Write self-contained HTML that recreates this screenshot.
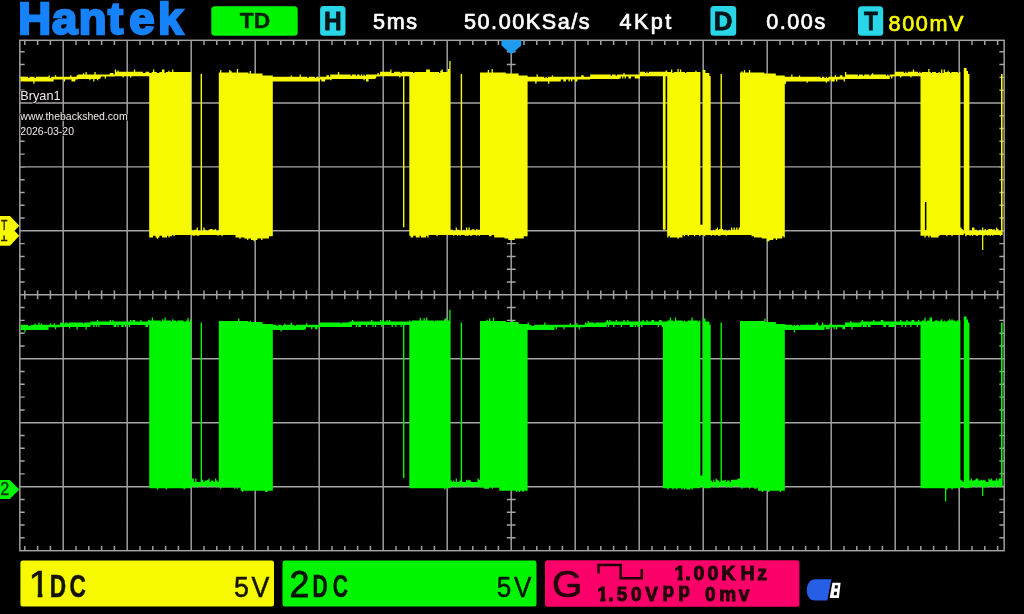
<!DOCTYPE html>
<html lang="en">
<head>
<meta charset="utf-8">
<title>Hantek oscilloscope capture</title>
<style>
html,body{margin:0;padding:0;background:#000;}
body{width:1024px;height:614px;overflow:hidden;position:relative;font-family:"Liberation Sans",sans-serif;}
svg{position:absolute;left:0;top:0;display:block;}
svg{will-change:transform;filter:blur(.45px);}
text{font-family:"Liberation Sans",sans-serif;}
.hd{font-size:21.6px;fill:#fff;letter-spacing:1.55px;stroke:#fff;stroke-width:.7px;}
.wm{fill:#f4eaea;stroke:#000;stroke-width:1.6px;paint-order:stroke;stroke-linejoin:round;}
</style>
</head>
<body>
<svg width="1024" height="614" viewBox="0 0 1024 614">
<rect width="1024" height="614" fill="#000"/>
<g id="grid"><rect x="19.84" y="40.3" width="984.32" height="510.40" fill="none" stroke="#a4a4a4" stroke-width="1.45"/><path d="M63.20 40.3V550.7M127.20 40.3V550.7M191.20 40.3V550.7M255.20 40.3V550.7M319.20 40.3V550.7M383.20 40.3V550.7M447.20 40.3V550.7M511.20 40.3V550.7M575.20 40.3V550.7M639.20 40.3V550.7M703.20 40.3V550.7M767.20 40.3V550.7M831.20 40.3V550.7M895.20 40.3V550.7M959.20 40.3V550.7M19.84 102.92H1004.16M19.84 166.88H1004.16M19.84 230.84H1004.16M19.84 294.80H1004.16M19.84 358.76H1004.16M19.84 422.72H1004.16M19.84 486.68H1004.16M24.80 40.3v4.6M24.80 550.7v-4.6M24.80 290.40v8.8M37.60 40.3v4.6M37.60 550.7v-4.6M37.60 290.40v8.8M50.40 40.3v4.6M50.40 550.7v-4.6M50.40 290.40v8.8M63.20 40.3v4.6M63.20 550.7v-4.6M63.20 290.40v8.8M76.00 40.3v4.6M76.00 550.7v-4.6M76.00 290.40v8.8M88.80 40.3v4.6M88.80 550.7v-4.6M88.80 290.40v8.8M101.60 40.3v4.6M101.60 550.7v-4.6M101.60 290.40v8.8M114.40 40.3v4.6M114.40 550.7v-4.6M114.40 290.40v8.8M127.20 40.3v4.6M127.20 550.7v-4.6M127.20 290.40v8.8M140.00 40.3v4.6M140.00 550.7v-4.6M140.00 290.40v8.8M152.80 40.3v4.6M152.80 550.7v-4.6M152.80 290.40v8.8M165.60 40.3v4.6M165.60 550.7v-4.6M165.60 290.40v8.8M178.40 40.3v4.6M178.40 550.7v-4.6M178.40 290.40v8.8M191.20 40.3v4.6M191.20 550.7v-4.6M191.20 290.40v8.8M204.00 40.3v4.6M204.00 550.7v-4.6M204.00 290.40v8.8M216.80 40.3v4.6M216.80 550.7v-4.6M216.80 290.40v8.8M229.60 40.3v4.6M229.60 550.7v-4.6M229.60 290.40v8.8M242.40 40.3v4.6M242.40 550.7v-4.6M242.40 290.40v8.8M255.20 40.3v4.6M255.20 550.7v-4.6M255.20 290.40v8.8M268.00 40.3v4.6M268.00 550.7v-4.6M268.00 290.40v8.8M280.80 40.3v4.6M280.80 550.7v-4.6M280.80 290.40v8.8M293.60 40.3v4.6M293.60 550.7v-4.6M293.60 290.40v8.8M306.40 40.3v4.6M306.40 550.7v-4.6M306.40 290.40v8.8M319.20 40.3v4.6M319.20 550.7v-4.6M319.20 290.40v8.8M332.00 40.3v4.6M332.00 550.7v-4.6M332.00 290.40v8.8M344.80 40.3v4.6M344.80 550.7v-4.6M344.80 290.40v8.8M357.60 40.3v4.6M357.60 550.7v-4.6M357.60 290.40v8.8M370.40 40.3v4.6M370.40 550.7v-4.6M370.40 290.40v8.8M383.20 40.3v4.6M383.20 550.7v-4.6M383.20 290.40v8.8M396.00 40.3v4.6M396.00 550.7v-4.6M396.00 290.40v8.8M408.80 40.3v4.6M408.80 550.7v-4.6M408.80 290.40v8.8M421.60 40.3v4.6M421.60 550.7v-4.6M421.60 290.40v8.8M434.40 40.3v4.6M434.40 550.7v-4.6M434.40 290.40v8.8M447.20 40.3v4.6M447.20 550.7v-4.6M447.20 290.40v8.8M460.00 40.3v4.6M460.00 550.7v-4.6M460.00 290.40v8.8M472.80 40.3v4.6M472.80 550.7v-4.6M472.80 290.40v8.8M485.60 40.3v4.6M485.60 550.7v-4.6M485.60 290.40v8.8M498.40 40.3v4.6M498.40 550.7v-4.6M498.40 290.40v8.8M511.20 40.3v4.6M511.20 550.7v-4.6M511.20 290.40v8.8M524.00 40.3v4.6M524.00 550.7v-4.6M524.00 290.40v8.8M536.80 40.3v4.6M536.80 550.7v-4.6M536.80 290.40v8.8M549.60 40.3v4.6M549.60 550.7v-4.6M549.60 290.40v8.8M562.40 40.3v4.6M562.40 550.7v-4.6M562.40 290.40v8.8M575.20 40.3v4.6M575.20 550.7v-4.6M575.20 290.40v8.8M588.00 40.3v4.6M588.00 550.7v-4.6M588.00 290.40v8.8M600.80 40.3v4.6M600.80 550.7v-4.6M600.80 290.40v8.8M613.60 40.3v4.6M613.60 550.7v-4.6M613.60 290.40v8.8M626.40 40.3v4.6M626.40 550.7v-4.6M626.40 290.40v8.8M639.20 40.3v4.6M639.20 550.7v-4.6M639.20 290.40v8.8M652.00 40.3v4.6M652.00 550.7v-4.6M652.00 290.40v8.8M664.80 40.3v4.6M664.80 550.7v-4.6M664.80 290.40v8.8M677.60 40.3v4.6M677.60 550.7v-4.6M677.60 290.40v8.8M690.40 40.3v4.6M690.40 550.7v-4.6M690.40 290.40v8.8M703.20 40.3v4.6M703.20 550.7v-4.6M703.20 290.40v8.8M716.00 40.3v4.6M716.00 550.7v-4.6M716.00 290.40v8.8M728.80 40.3v4.6M728.80 550.7v-4.6M728.80 290.40v8.8M741.60 40.3v4.6M741.60 550.7v-4.6M741.60 290.40v8.8M754.40 40.3v4.6M754.40 550.7v-4.6M754.40 290.40v8.8M767.20 40.3v4.6M767.20 550.7v-4.6M767.20 290.40v8.8M780.00 40.3v4.6M780.00 550.7v-4.6M780.00 290.40v8.8M792.80 40.3v4.6M792.80 550.7v-4.6M792.80 290.40v8.8M805.60 40.3v4.6M805.60 550.7v-4.6M805.60 290.40v8.8M818.40 40.3v4.6M818.40 550.7v-4.6M818.40 290.40v8.8M831.20 40.3v4.6M831.20 550.7v-4.6M831.20 290.40v8.8M844.00 40.3v4.6M844.00 550.7v-4.6M844.00 290.40v8.8M856.80 40.3v4.6M856.80 550.7v-4.6M856.80 290.40v8.8M869.60 40.3v4.6M869.60 550.7v-4.6M869.60 290.40v8.8M882.40 40.3v4.6M882.40 550.7v-4.6M882.40 290.40v8.8M895.20 40.3v4.6M895.20 550.7v-4.6M895.20 290.40v8.8M908.00 40.3v4.6M908.00 550.7v-4.6M908.00 290.40v8.8M920.80 40.3v4.6M920.80 550.7v-4.6M920.80 290.40v8.8M933.60 40.3v4.6M933.60 550.7v-4.6M933.60 290.40v8.8M946.40 40.3v4.6M946.40 550.7v-4.6M946.40 290.40v8.8M959.20 40.3v4.6M959.20 550.7v-4.6M959.20 290.40v8.8M972.00 40.3v4.6M972.00 550.7v-4.6M972.00 290.40v8.8M984.80 40.3v4.6M984.80 550.7v-4.6M984.80 290.40v8.8M997.60 40.3v4.6M997.60 550.7v-4.6M997.60 290.40v8.8M19.84 51.79h4.8M1004.16 51.79h-4.8M506.80 51.79h8.8M19.84 64.58h4.8M1004.16 64.58h-4.8M506.80 64.58h8.8M19.84 77.37h4.8M1004.16 77.37h-4.8M506.80 77.37h8.8M19.84 90.16h4.8M1004.16 90.16h-4.8M506.80 90.16h8.8M19.84 102.95h4.8M1004.16 102.95h-4.8M506.80 102.95h8.8M19.84 115.74h4.8M1004.16 115.74h-4.8M506.80 115.74h8.8M19.84 128.53h4.8M1004.16 128.53h-4.8M506.80 128.53h8.8M19.84 141.32h4.8M1004.16 141.32h-4.8M506.80 141.32h8.8M19.84 154.11h4.8M1004.16 154.11h-4.8M506.80 154.11h8.8M19.84 166.90h4.8M1004.16 166.90h-4.8M506.80 166.90h8.8M19.84 179.69h4.8M1004.16 179.69h-4.8M506.80 179.69h8.8M19.84 192.48h4.8M1004.16 192.48h-4.8M506.80 192.48h8.8M19.84 205.27h4.8M1004.16 205.27h-4.8M506.80 205.27h8.8M19.84 218.06h4.8M1004.16 218.06h-4.8M506.80 218.06h8.8M19.84 230.85h4.8M1004.16 230.85h-4.8M506.80 230.85h8.8M19.84 243.64h4.8M1004.16 243.64h-4.8M506.80 243.64h8.8M19.84 256.43h4.8M1004.16 256.43h-4.8M506.80 256.43h8.8M19.84 269.22h4.8M1004.16 269.22h-4.8M506.80 269.22h8.8M19.84 282.01h4.8M1004.16 282.01h-4.8M506.80 282.01h8.8M19.84 294.80h4.8M1004.16 294.80h-4.8M506.80 294.80h8.8M19.84 307.59h4.8M1004.16 307.59h-4.8M506.80 307.59h8.8M19.84 320.38h4.8M1004.16 320.38h-4.8M506.80 320.38h8.8M19.84 333.17h4.8M1004.16 333.17h-4.8M506.80 333.17h8.8M19.84 345.96h4.8M1004.16 345.96h-4.8M506.80 345.96h8.8M19.84 358.75h4.8M1004.16 358.75h-4.8M506.80 358.75h8.8M19.84 371.54h4.8M1004.16 371.54h-4.8M506.80 371.54h8.8M19.84 384.33h4.8M1004.16 384.33h-4.8M506.80 384.33h8.8M19.84 397.12h4.8M1004.16 397.12h-4.8M506.80 397.12h8.8M19.84 409.91h4.8M1004.16 409.91h-4.8M506.80 409.91h8.8M19.84 422.70h4.8M1004.16 422.70h-4.8M506.80 422.70h8.8M19.84 435.49h4.8M1004.16 435.49h-4.8M506.80 435.49h8.8M19.84 448.28h4.8M1004.16 448.28h-4.8M506.80 448.28h8.8M19.84 461.07h4.8M1004.16 461.07h-4.8M506.80 461.07h8.8M19.84 473.86h4.8M1004.16 473.86h-4.8M506.80 473.86h8.8M19.84 486.65h4.8M1004.16 486.65h-4.8M506.80 486.65h8.8M19.84 499.44h4.8M1004.16 499.44h-4.8M506.80 499.44h8.8M19.84 512.23h4.8M1004.16 512.23h-4.8M506.80 512.23h8.8M19.84 525.02h4.8M1004.16 525.02h-4.8M506.80 525.02h8.8M19.84 537.81h4.8M1004.16 537.81h-4.8M506.80 537.81h8.8" fill="none" stroke="#a4a4a4" stroke-width="1.45"/></g>
<g id="waves"><path d="M20.50 76.80V76.80H21.77V76.80H23.05V76.80H24.32V76.80H25.60V76.80H26.87V76.80H28.15V78.00H29.42V76.80H30.69V76.80H31.97V76.80H33.24V76.80H34.52V78.00H35.79V76.80H37.07V76.80H38.34V76.80H39.61V76.80H40.89V76.80H42.16V76.80H43.44V76.80H44.71V76.80H45.99V76.80H47.26V76.80H48.53V75.50H49.81V78.00H51.08V76.80H52.36V76.80H53.63V76.80H54.90V75.20H56.18V76.80H57.45V76.80H58.73V76.80H60.00V76.80H61.28V76.80H62.55V76.80H63.82V76.80H65.10V76.80H66.37V76.80H67.65V76.80H68.92V76.80H70.20V75.20H71.47V76.80H72.74V76.80H74.02V76.80H75.29V76.80H76.57V75.20H77.84V74.50H79.12V74.50H80.39V74.50H81.66V74.50H82.94V73.20H84.21V74.50H85.49V72.10H86.76V74.50H88.04V74.50H89.31V74.50H90.58V74.50H91.86V74.50H93.13V74.50H94.41V72.10H95.68V74.50H96.96V74.50H98.23V74.50H99.50V74.50H100.78V74.50H102.05V74.50H103.33V74.50H104.60V74.50H105.88V74.50H107.15V74.50H108.42V74.50H109.70V72.90H110.97V72.90H112.25V72.90H113.52V74.50H114.80V69.40H116.07V71.80H117.34V70.50H118.62V71.80H119.89V71.80H121.17V71.80H122.44V71.80H123.71V71.80H124.99V71.80H126.26V71.80H127.54V71.80H128.81V71.80H130.09V71.80H131.36V71.80H132.63V71.80H133.91V69.40H135.18V71.80H136.46V71.80H137.73V71.80H139.01V71.80H140.28V71.80H141.55V71.80H142.83V73.00H144.10V73.00H145.38V71.80H146.65V71.80H147.93V71.80H149.20V73.00H150.47V73.00H151.75V72.00H153.02V69.40H154.29V72.00H155.56V72.00H156.84V73.00H158.11V73.00H159.38V72.00H160.65V72.00H161.93V69.40H163.20V69.40H164.47V73.00H165.75V72.00H167.02V72.00H168.29V70.70H169.56V72.00H170.84V72.00H172.11V69.40H173.38V72.00H174.65V72.00H175.93V72.00H177.20V72.00H178.47V72.00H179.75V72.00H181.02V72.00H182.29V72.00H183.56V72.00H184.84V72.00H186.11V72.00H187.38V72.00H188.65V72.00H189.93V72.00H191.20V229.80H192.54V231.10H193.89V229.80H195.23V229.80H196.57V227.60H197.91V231.10H199.26V231.10H200.60V74.00H202.00V231.10H203.29V227.60H204.58V229.80H205.88V231.10H207.17V231.10H208.46V229.80H209.75V228.90H211.05V228.90H212.34V229.80H213.63V229.80H214.92V228.90H216.22V231.10H217.51V231.10H218.80V72.50H220.09V69.90H221.37V72.50H222.66V72.50H223.94V72.50H225.23V72.50H226.51V72.50H227.80V72.50H229.09V69.90H230.37V71.20H231.66V72.50H232.94V72.50H234.23V72.50H235.51V72.50H236.80V69.00H238.09V72.50H239.37V72.50H240.66V72.50H241.94V72.50H243.23V72.50H244.51V72.50H245.80V72.50H247.09V72.50H248.37V73.60H249.66V71.00H250.94V73.60H252.23V73.60H253.51V73.60H254.80V73.60H256.09V73.60H257.37V73.60H258.66V73.60H259.94V73.60H261.23V73.60H262.51V75.40H263.80V75.40H265.09V75.40H266.37V75.40H267.66V75.40H268.94V75.40H270.23V75.40H271.51V75.40H272.80V76.80H274.08V76.80H275.35V76.80H276.63V76.80H277.91V76.80H279.18V76.80H280.46V76.80H281.74V76.80H283.01V76.80H284.29V76.80H285.56V76.80H286.84V76.80H288.12V76.80H289.39V76.80H290.67V75.50H291.95V76.80H293.22V76.80H294.50V76.80H295.78V76.80H297.05V76.80H298.33V76.80H299.61V74.40H300.88V76.80H302.16V76.80H303.44V76.80H304.71V76.80H305.99V76.80H307.26V78.00H308.54V76.80H309.82V76.80H311.09V76.80H312.37V76.80H313.65V76.80H314.92V78.00H316.20V76.80H317.48V76.80H318.75V78.00H320.03V76.80H321.31V76.80H322.58V76.80H323.86V76.80H325.14V76.80H326.41V75.20H327.69V75.20H328.96V76.80H330.24V74.50H331.52V74.50H332.79V74.50H334.07V74.50H335.35V74.50H336.62V74.50H337.90V72.10H339.18V74.50H340.45V74.50H341.73V74.50H343.01V74.50H344.28V74.50H345.56V74.50H346.84V74.50H348.11V74.50H349.39V74.50H350.66V75.70H351.94V74.50H353.22V74.50H354.49V74.50H355.77V75.70H357.05V74.50H358.32V74.50H359.60V75.70H360.88V74.50H362.15V75.70H363.43V74.50H364.71V75.70H365.98V74.50H367.26V74.50H368.54V74.50H369.81V74.50H371.09V74.50H372.36V74.50H373.64V74.50H374.92V74.50H376.19V74.50H377.47V72.90H378.75V74.50H380.02V71.80H381.30V71.80H382.58V71.80H383.85V71.80H385.13V71.80H386.41V71.80H387.68V71.80H388.96V71.80H390.24V69.40H391.51V73.00H392.79V73.00H394.06V71.80H395.34V71.80H396.62V71.80H397.89V71.80H399.17V71.80H400.45V73.00H401.72V71.80H403.00V71.80H404.40V71.80H405.62V71.80H406.85V71.80H408.08V71.80H409.30V72.00H410.59V72.00H411.88V72.00H413.17V73.00H414.46V72.00H415.75V72.00H417.04V72.00H418.33V72.00H419.62V72.00H420.92V72.00H422.21V72.00H423.50V72.00H424.79V72.00H426.08V69.40H427.37V69.40H428.66V69.40H429.95V72.00H431.24V72.00H432.53V72.00H433.82V72.00H435.11V72.00H436.40V72.00H437.69V72.00H438.98V73.00H440.27V70.70H441.57V69.40H442.86V72.00H444.15V72.00H445.44V72.00H446.73V72.00H448.02V69.00H449.31V61.00H450.60V229.80H451.86V229.80H453.12V231.10H454.39V231.10H455.65V227.60H456.91V229.80H458.18V229.80H459.44V231.10H460.70V74.00H462.10V231.10H463.38V229.80H464.66V231.10H465.94V227.60H467.21V229.80H468.49V227.60H469.77V231.10H471.05V229.80H472.33V228.90H473.61V229.80H474.89V231.10H476.16V228.90H477.44V229.80H478.72V229.80H480.00V72.50H481.29V72.50H482.57V72.50H483.86V72.50H485.15V72.50H486.43V72.50H487.72V69.90H489.01V72.50H490.29V72.50H491.58V69.00H492.86V72.50H494.15V72.50H495.44V72.50H496.72V72.50H498.01V72.50H499.30V72.50H500.58V72.50H501.87V72.50H503.16V72.50H504.44V72.50H505.73V73.60H507.02V73.60H508.30V73.60H509.59V73.60H510.88V73.60H512.16V73.60H513.45V73.60H514.74V73.60H516.02V73.60H517.31V73.60H518.59V75.40H519.88V75.40H521.17V75.40H522.45V75.40H523.74V75.40H525.03V75.40H526.31V75.40H527.60V76.80H528.88V76.80H530.15V76.80H531.43V76.80H532.71V76.80H533.98V76.80H535.26V76.80H536.53V74.40H537.81V76.80H539.09V76.80H540.36V76.80H541.64V76.80H542.92V76.80H544.19V78.00H545.47V76.80H546.75V78.00H548.02V76.80H549.30V76.80H550.58V76.80H551.85V75.50H553.13V76.80H554.40V76.80H555.68V76.80H556.96V76.80H558.23V76.80H559.51V76.80H560.79V76.80H562.06V76.80H563.34V76.80H564.62V76.80H565.89V76.80H567.17V76.80H568.45V76.80H569.72V76.80H571.00V76.80H572.27V76.80H573.55V76.80H574.83V76.80H576.10V76.80H577.38V76.80H578.66V76.80H579.93V76.80H581.21V75.20H582.49V75.20H583.76V76.80H585.04V76.80H586.32V76.80H587.59V76.80H588.87V76.80H590.14V74.50H591.42V74.50H592.70V74.50H593.97V74.50H595.25V74.50H596.53V74.50H597.80V74.50H599.08V74.50H600.36V74.50H601.63V74.50H602.91V74.50H604.18V74.50H605.46V74.50H606.74V74.50H608.01V74.50H609.29V74.50H610.57V75.70H611.84V74.50H613.12V74.50H614.40V74.50H615.67V75.70H616.95V74.50H618.23V74.50H619.50V74.50H620.78V74.50H622.05V74.50H623.33V72.90H624.61V74.50H625.88V74.50H627.16V74.50H628.44V74.50H629.71V74.50H630.99V74.50H632.27V74.50H633.54V74.50H634.82V74.50H636.10V74.50H637.37V74.50H638.65V74.50H639.92V71.80H641.20V71.80H642.48V71.80H643.75V71.80H645.03V73.00H646.31V71.80H647.58V73.00H648.86V71.80H650.14V71.80H651.41V71.80H652.69V71.80H653.97V71.80H655.24V71.80H656.52V71.80H657.79V71.80H659.07V71.80H660.35V71.80H661.62V71.80H662.90V71.80H664.25V71.80H665.60V70.50H667.20V72.00H668.48V72.00H669.75V72.00H671.03V69.40H672.31V73.00H673.58V72.00H674.86V72.00H676.14V72.00H677.42V69.00H678.69V72.00H679.97V69.40H681.25V72.00H682.52V72.00H683.80V72.00H685.08V73.00H686.35V72.00H687.63V72.00H688.91V72.00H690.18V72.00H691.46V72.00H692.74V72.00H694.02V72.00H695.29V70.70H696.57V72.00H697.85V72.00H699.12V72.00H700.40V224.80H701.60V224.80H702.80V70.00H704.12V70.00H705.43V73.00H706.75V73.00H708.07V73.00H709.38V76.00H710.70V231.10H711.93V231.10H713.15V229.80H714.38V231.10H715.60V228.90H716.83V227.60H718.05V229.80H719.27V228.90H720.50V74.00H721.90V228.90H723.19V231.10H724.49V229.80H725.78V231.10H727.07V231.10H728.36V229.80H729.66V231.10H730.95V227.60H732.24V229.80H733.54V227.60H734.83V229.80H736.12V227.60H737.41V229.80H738.71V227.60H740.00V72.50H741.28V71.20H742.56V72.50H743.84V69.90H745.12V72.50H746.40V72.50H747.68V72.50H748.96V69.90H750.24V72.50H751.52V72.50H752.80V72.50H754.08V72.50H755.36V72.50H756.64V72.50H757.92V72.50H759.20V72.50H760.48V72.50H761.76V72.50H763.04V72.50H764.32V73.60H765.60V73.60H766.88V73.60H768.16V73.60H769.44V73.60H770.72V73.60H772.00V73.60H773.28V73.60H774.56V73.60H775.84V75.40H777.12V75.40H778.40V75.40H779.68V75.40H780.96V75.40H782.24V75.40H783.52V75.40H784.80V76.80H786.08V76.80H787.36V76.80H788.64V76.80H789.92V76.80H791.20V74.40H792.48V76.80H793.76V76.80H795.04V76.80H796.32V76.80H797.60V76.80H798.88V75.50H800.16V76.80H801.44V76.80H802.72V76.80H804.00V76.80H805.28V76.80H806.56V76.80H807.84V76.80H809.12V76.80H810.40V76.80H811.68V76.80H812.96V76.80H814.24V76.80H815.52V76.80H816.80V76.80H818.08V76.80H819.37V76.80H820.65V78.00H821.93V76.80H823.21V76.80H824.49V78.00H825.77V76.80H827.05V78.00H828.33V76.80H829.61V76.80H830.89V76.80H832.17V76.80H833.45V76.80H834.73V75.20H836.01V76.80H837.29V76.80H838.57V76.80H839.85V75.20H841.13V75.20H842.41V76.80H843.69V76.80H844.97V72.10H846.25V74.50H847.53V74.50H848.81V74.50H850.09V74.50H851.37V74.50H852.65V74.50H853.93V74.50H855.21V74.50H856.49V74.50H857.77V75.70H859.05V74.50H860.33V74.50H861.61V74.50H862.89V75.70H864.17V74.50H865.45V74.50H866.73V74.50H868.01V74.50H869.29V75.70H870.57V74.50H871.85V73.20H873.13V74.50H874.41V74.50H875.69V74.50H876.97V74.50H878.25V74.50H879.53V74.50H880.81V74.50H882.09V74.50H883.37V74.50H884.65V74.50H885.93V75.70H887.22V74.50H888.50V75.70H889.78V74.50H891.06V74.50H892.34V74.50H893.62V74.50H894.90V71.80H896.18V71.80H897.46V71.80H898.74V71.80H900.02V71.80H901.30V71.80H902.58V71.80H903.86V73.00H905.14V71.80H906.42V73.00H907.70V71.80H908.98V71.80H910.26V71.80H911.54V71.80H912.82V69.40H914.10V71.80H915.38V71.80H916.66V71.80H917.94V73.00H919.22V71.80H920.50V73.00H921.79V72.00H923.07V72.00H924.36V72.00H925.65V72.00H926.94V72.00H928.22V69.00H929.51V72.00H930.80V73.00H932.08V72.00H933.37V72.00H934.66V72.00H935.95V73.00H937.23V73.00H938.52V72.00H939.81V73.00H941.09V69.40H942.38V73.00H943.67V69.40H944.95V72.00H946.24V72.00H947.53V70.70H948.82V72.00H950.10V73.00H951.39V72.00H952.68V72.00H953.96V72.00H955.25V72.00H956.54V72.00H957.83V73.00H959.11V72.00H960.40V227.60H961.53V228.90H962.67V231.10H963.80V68.00H965.20V68.00H966.60V71.00H968.00V74.00H969.40V231.10H970.66V231.10H971.93V227.60H973.19V227.60H974.46V229.80H975.72V229.80H976.98V231.10H978.25V231.10H979.51V229.80H980.78V231.10H982.04V227.60H983.30V231.10H984.57V228.90H985.83V231.10H987.10V229.80H988.36V228.90H989.62V228.90H990.89V228.90H992.15V229.80H993.42V228.90H994.68V231.10H995.94V227.60H997.21V228.90H998.47V231.10H999.74V231.10H1001.00V74.00H1002.60V234.90V234.90H1001.00V235.80H999.74V234.90H998.47V234.90H997.21V234.90H995.94V234.90H994.68V234.90H993.42V235.80H992.15V234.90H990.89V235.80H989.62V234.90H988.36V235.80H987.10V234.90H985.83V234.90H984.57V235.80H983.30V250.00H982.04V234.90H980.78V234.90H979.51V234.90H978.25V235.80H976.98V235.80H975.72V234.90H974.46V234.90H973.19V235.80H971.93V234.90H970.66V235.80H969.40V235.00H968.00V235.00H966.60V236.30H965.20V233.40H963.80V234.90H962.67V234.90H961.53V234.90H960.40V235.00H959.11V235.00H957.83V235.00H956.54V235.00H955.25V235.00H953.96V235.00H952.68V236.30H951.39V235.00H950.10V235.00H948.82V235.00H947.53V236.30H946.24V235.00H944.95V235.00H943.67V235.00H942.38V235.00H941.09V235.00H939.81V235.80H938.52V237.40H937.23V237.40H935.95V237.40H934.66V237.40H933.37V237.40H932.08V237.40H930.80V235.80H929.51V237.40H928.22V235.80H926.94V235.80H925.65V237.40H924.36V235.80H923.07V235.80H921.79V235.80H920.50V76.20H919.22V76.20H917.94V76.20H916.66V76.20H915.38V76.20H914.10V76.20H912.82V76.20H911.54V77.50H910.26V76.20H908.98V76.20H907.70V76.20H906.42V76.20H905.14V76.20H903.86V76.20H902.58V76.20H901.30V77.50H900.02V76.20H898.74V76.20H897.46V76.20H896.18V76.20H894.90V76.60H893.62V76.60H892.34V78.60H891.06V76.60H889.78V79.00H888.50V79.00H887.22V79.00H885.93V79.00H884.65V79.00H883.37V79.00H882.09V79.00H880.81V79.00H879.53V79.00H878.25V79.00H876.97V79.00H875.69V79.00H874.41V79.00H873.13V79.00H871.85V79.00H870.57V79.00H869.29V79.00H868.01V79.00H866.73V79.00H865.45V79.00H864.17V79.00H862.89V79.00H861.61V79.00H860.33V79.00H859.05V79.00H857.77V79.00H856.49V79.00H855.21V79.00H853.93V79.00H852.65V79.00H851.37V79.00H850.09V79.00H848.81V79.00H847.53V79.00H846.25V79.00H844.97V81.40H843.69V79.40H842.41V79.40H841.13V79.40H839.85V79.40H838.57V79.40H837.29V81.40H836.01V79.40H834.73V81.40H833.45V81.40H832.17V81.40H830.89V79.40H829.61V81.40H828.33V81.40H827.05V82.70H825.77V81.40H824.49V81.40H823.21V81.40H821.93V81.40H820.65V81.40H819.37V81.40H818.08V81.40H816.80V81.40H815.52V81.40H814.24V81.40H812.96V81.40H811.68V81.40H810.40V81.40H809.12V81.40H807.84V82.70H806.56V81.40H805.28V81.40H804.00V81.40H802.72V81.40H801.44V81.40H800.16V81.40H798.88V81.40H797.60V81.40H796.32V81.40H795.04V81.40H793.76V81.40H792.48V81.40H791.20V81.40H789.92V81.40H788.64V81.40H787.36V81.40H786.08V83.80H784.80V237.50H783.52V236.20H782.24V238.60H780.96V238.60H779.68V238.60H778.40V238.60H777.12V239.90H775.84V238.60H774.56V238.60H773.28V239.90H772.00V239.90H770.72V239.90H769.44V241.20H768.16V241.20H766.88V238.60H765.60V238.60H764.32V238.60H763.04V238.60H761.76V237.40H760.48V237.40H759.20V237.40H757.92V237.40H756.64V237.40H755.36V237.40H754.08V236.20H752.80V236.20H751.52V234.90H750.24V234.90H748.96V234.90H747.68V234.90H746.40V234.90H745.12V234.90H743.84V234.90H742.56V234.90H741.28V234.90H740.00V234.90H738.71V234.90H737.41V234.90H736.12V234.90H734.83V234.90H733.54V234.90H732.24V234.90H730.95V234.90H729.66V234.90H728.36V234.90H727.07V235.80H725.78V234.90H724.49V234.90H723.19V234.90H721.90V234.90H720.50V235.80H719.27V235.80H718.05V234.90H716.83V234.90H715.60V235.80H714.38V234.90H713.15V234.90H711.93V235.80H710.70V235.00H709.38V235.00H708.07V235.00H706.75V235.00H705.43V236.30H704.12V235.00H702.80V234.90H701.60V234.90H700.40V236.30H699.12V235.00H697.85V235.00H696.57V235.00H695.29V236.30H694.02V235.00H692.74V235.00H691.46V235.00H690.18V235.00H688.91V236.30H687.63V235.00H686.35V235.00H685.08V236.30H683.80V235.00H682.52V237.40H681.25V237.40H679.97V237.40H678.69V238.70H677.42V237.40H676.14V237.40H674.86V237.40H673.58V237.40H672.31V237.40H671.03V237.40H669.75V235.80H668.48V237.40H667.20V76.20H665.60V229.80H664.25V229.80H662.90V76.20H661.62V76.20H660.35V76.20H659.07V76.20H657.79V76.20H656.52V76.20H655.24V76.20H653.97V76.20H652.69V76.20H651.41V76.20H650.14V76.20H648.86V76.20H647.58V76.20H646.31V76.20H645.03V76.20H643.75V76.20H642.48V76.20H641.20V76.20H639.92V78.60H638.65V78.60H637.37V78.60H636.10V78.60H634.82V76.60H633.54V76.60H632.27V76.60H630.99V78.60H629.71V78.60H628.44V76.60H627.16V76.60H625.88V78.60H624.61V76.60H623.33V78.60H622.05V76.60H620.78V78.60H619.50V79.00H618.23V79.00H616.95V79.00H615.67V79.00H614.40V79.00H613.12V79.00H611.84V79.00H610.57V79.00H609.29V79.00H608.01V79.00H606.74V79.00H605.46V79.00H604.18V79.00H602.91V79.00H601.63V79.00H600.36V79.00H599.08V79.00H597.80V79.00H596.53V79.00H595.25V79.00H593.97V79.00H592.70V79.00H591.42V79.00H590.14V79.40H588.87V79.40H587.59V79.40H586.32V79.40H585.04V79.40H583.76V79.40H582.49V79.40H581.21V79.40H579.93V79.40H578.66V79.40H577.38V81.40H576.10V81.40H574.83V79.40H573.55V79.40H572.27V81.40H571.00V79.40H569.72V81.40H568.45V79.40H567.17V79.40H565.89V81.40H564.62V81.40H563.34V79.40H562.06V79.40H560.79V81.40H559.51V81.40H558.23V81.40H556.96V81.40H555.68V81.40H554.40V81.40H553.13V81.40H551.85V81.40H550.58V81.40H549.30V83.80H548.02V81.40H546.75V81.40H545.47V81.40H544.19V81.40H542.92V81.40H541.64V81.40H540.36V81.40H539.09V81.40H537.81V81.40H536.53V83.80H535.26V81.40H533.98V81.40H532.71V81.40H531.43V81.40H530.15V81.40H528.88V81.40H527.60V236.20H526.31V236.20H525.03V236.20H523.74V238.60H522.45V238.60H521.17V238.60H519.88V238.60H518.59V238.60H517.31V238.60H516.02V238.60H514.74V239.90H513.45V239.90H512.16V239.90H510.88V239.90H509.59V239.90H508.30V238.60H507.02V238.60H505.73V238.60H504.44V237.40H503.16V237.40H501.87V237.40H500.58V237.40H499.30V237.40H498.01V237.40H496.72V237.40H495.44V237.40H494.15V234.90H492.86V234.90H491.58V236.20H490.29V236.20H489.01V234.90H487.72V234.90H486.43V234.90H485.15V234.90H483.86V234.90H482.57V234.90H481.29V234.90H480.00V235.80H478.72V234.90H477.44V235.80H476.16V234.90H474.89V234.90H473.61V234.90H472.33V235.80H471.05V235.80H469.77V234.90H468.49V235.80H467.21V235.80H465.94V235.80H464.66V234.90H463.38V234.90H462.10V234.90H460.70V235.80H459.44V234.90H458.18V235.80H456.91V234.90H455.65V234.90H454.39V235.80H453.12V234.90H451.86V234.90H450.60V235.00H449.31V235.00H448.02V235.00H446.73V235.00H445.44V235.00H444.15V235.00H442.86V235.00H441.57V235.00H440.28V235.00H438.98V235.00H437.69V236.30H436.40V235.00H435.11V235.00H433.82V235.00H432.53V235.00H431.24V235.00H429.95V235.00H428.66V237.40H427.37V235.80H426.08V237.40H424.79V237.40H423.50V237.40H422.21V237.40H420.92V235.80H419.62V237.40H418.33V237.40H417.04V237.40H415.75V235.80H414.46V235.80H413.17V237.40H411.88V237.40H410.59V235.80H409.30V76.20H408.07V76.20H406.85V76.20H405.62V76.20H404.40V227.30H403.00V76.20H401.72V76.20H400.45V77.50H399.17V76.20H397.89V76.20H396.62V76.20H395.34V76.20H394.06V76.20H392.79V76.20H391.51V76.20H390.24V76.20H388.96V76.20H387.68V76.20H386.41V76.20H385.13V76.20H383.85V76.20H382.58V76.20H381.30V76.20H380.02V76.60H378.75V76.60H377.47V76.60H376.19V78.60H374.92V79.00H373.64V79.00H372.36V79.00H371.09V79.00H369.81V79.00H368.54V81.40H367.26V81.40H365.98V79.00H364.71V80.30H363.43V79.00H362.15V79.00H360.88V79.00H359.60V79.00H358.32V79.00H357.05V79.00H355.77V79.00H354.49V79.00H353.22V79.00H351.94V79.00H350.66V79.00H349.39V79.00H348.11V79.00H346.84V79.00H345.56V79.00H344.28V79.00H343.01V79.00H341.73V79.00H340.45V79.00H339.18V79.00H337.90V79.00H336.62V79.00H335.35V79.00H334.07V79.00H332.79V79.00H331.52V80.30H330.24V79.40H328.96V79.40H327.69V79.40H326.41V79.40H325.14V81.40H323.86V81.40H322.58V81.40H321.31V79.40H320.03V81.40H318.75V81.40H317.48V81.40H316.20V81.40H314.92V81.40H313.65V81.40H312.37V81.40H311.09V81.40H309.82V81.40H308.54V81.40H307.26V81.40H305.99V81.40H304.71V81.40H303.44V81.40H302.16V81.40H300.88V81.40H299.61V81.40H298.33V81.40H297.05V81.40H295.78V81.40H294.50V81.40H293.22V81.40H291.95V81.40H290.67V81.40H289.39V81.40H288.12V81.40H286.84V81.40H285.56V81.40H284.29V81.40H283.01V81.40H281.74V81.40H280.46V81.40H279.18V81.40H277.91V81.40H276.63V81.40H275.35V81.40H274.08V81.40H272.80V236.20H271.51V236.20H270.23V236.20H268.94V238.60H267.66V238.60H266.37V238.60H265.09V238.60H263.80V238.60H262.51V239.90H261.23V238.60H259.94V238.60H258.66V238.60H257.37V239.90H256.09V239.90H254.80V241.20H253.51V239.90H252.23V239.90H250.94V238.60H249.66V238.60H248.37V239.90H247.09V238.60H245.80V238.70H244.51V237.40H243.23V237.40H241.94V237.40H240.66V238.70H239.37V237.40H238.09V237.40H236.80V237.40H235.51V234.90H234.23V234.90H232.94V234.90H231.66V234.90H230.37V234.90H229.09V234.90H227.80V234.90H226.51V234.90H225.23V234.90H223.94V234.90H222.66V236.20H221.37V234.90H220.09V234.90H218.80V235.80H217.51V234.90H216.22V234.90H214.92V234.90H213.63V234.90H212.34V234.90H211.05V234.90H209.75V234.90H208.46V234.90H207.17V234.90H205.88V234.90H204.58V234.90H203.29V234.90H202.00V234.90H200.60V234.90H199.26V235.80H197.91V235.80H196.57V234.90H195.23V235.80H193.89V235.80H192.54V234.90H191.20V235.00H189.93V235.00H188.65V235.00H187.38V235.00H186.11V235.00H184.84V235.00H183.56V235.00H182.29V235.00H181.02V235.00H179.75V235.00H178.47V235.00H177.20V235.00H175.93V235.00H174.65V236.30H173.38V235.00H172.11V236.30H170.84V236.30H169.56V237.40H168.29V235.80H167.02V237.40H165.75V237.40H164.47V237.40H163.20V237.40H161.93V235.80H160.65V235.80H159.38V237.40H158.11V238.70H156.84V237.40H155.56V235.80H154.29V235.80H153.02V237.40H151.75V237.40H150.47V237.40H149.20V76.20H147.93V76.20H146.65V76.20H145.38V76.20H144.10V76.20H142.83V76.20H141.55V76.20H140.28V76.20H139.01V76.20H137.73V76.20H136.46V76.20H135.18V76.20H133.91V76.20H132.63V76.20H131.36V77.50H130.09V76.20H128.81V76.20H127.54V76.20H126.26V76.20H124.99V76.20H123.71V77.50H122.44V76.20H121.17V76.20H119.89V76.20H118.62V76.20H117.34V76.20H116.07V76.20H114.80V76.60H113.52V76.60H112.25V76.60H110.97V76.60H109.70V76.60H108.42V76.60H107.15V76.60H105.88V78.60H104.60V76.60H103.33V76.60H102.05V76.60H100.78V78.60H99.50V79.00H98.23V80.30H96.96V79.00H95.68V79.00H94.41V81.40H93.13V79.00H91.86V79.00H90.58V80.30H89.31V79.00H88.04V79.00H86.76V79.00H85.49V79.00H84.21V79.00H82.94V79.00H81.66V79.00H80.39V79.00H79.12V79.00H77.84V79.40H76.57V79.40H75.29V81.40H74.02V81.40H72.74V81.40H71.47V79.40H70.20V79.40H68.92V79.40H67.65V79.40H66.37V79.40H65.10V81.40H63.82V79.40H62.55V79.40H61.28V79.40H60.00V79.40H58.73V79.40H57.45V79.40H56.18V79.40H54.90V79.40H53.63V81.40H52.36V81.40H51.08V81.40H49.81V81.40H48.53V81.40H47.26V81.40H45.99V81.40H44.71V81.40H43.44V81.40H42.16V81.40H40.89V81.40H39.61V81.40H38.34V81.40H37.07V81.40H35.79V81.40H34.52V83.80H33.24V81.40H31.97V81.40H30.69V81.40H29.42V81.40H28.15V81.40H26.87V81.40H25.60V81.40H24.32V81.40H23.05V81.40H21.77V81.40H20.50Z" fill="#f7f900"/><rect x="924.9" y="202" width="1.5" height="28" fill="#000"/><path d="M20.50 324.80V324.80H21.77V324.80H23.05V324.80H24.32V324.80H25.60V324.80H26.87V324.80H28.15V326.00H29.42V326.00H30.69V324.80H31.97V324.80H33.24V324.80H34.52V323.50H35.79V324.80H37.07V324.80H38.34V322.40H39.61V324.80H40.89V323.50H42.16V324.80H43.44V324.80H44.71V324.80H45.99V324.80H47.26V324.80H48.53V324.80H49.81V323.20H51.08V324.80H52.36V324.80H53.63V323.20H54.90V324.80H56.18V324.80H57.45V324.80H58.73V324.80H60.00V322.40H61.28V322.40H62.55V323.60H63.82V323.60H65.10V322.40H66.37V322.40H67.65V323.60H68.92V322.40H70.20V322.40H71.47V322.40H72.74V322.40H74.02V322.40H75.29V322.40H76.57V322.40H77.84V322.40H79.12V322.40H80.39V322.40H81.66V322.40H82.94V323.60H84.21V322.40H85.49V322.40H86.76V322.40H88.04V322.40H89.31V322.40H90.58V321.60H91.86V321.60H93.13V321.60H94.41V321.60H95.68V321.60H96.96V320.00H98.23V321.60H99.50V321.60H100.78V321.60H102.05V321.60H103.33V321.60H104.60V321.60H105.88V321.60H107.15V321.60H108.42V321.60H109.70V320.00H110.97V321.60H112.25V320.00H113.52V321.60H114.80V321.60H116.07V321.60H117.34V321.60H118.62V321.60H119.89V321.60H121.17V321.60H122.44V321.60H123.71V321.60H124.99V321.60H126.26V321.60H127.54V321.60H128.81V321.60H130.09V320.00H131.36V321.60H132.63V320.00H133.91V320.00H135.18V321.60H136.46V321.60H137.73V321.60H139.01V321.60H140.28V320.00H141.55V321.60H142.83V321.60H144.10V321.60H145.38V321.60H146.65V321.60H147.93V320.00H149.20V320.50H150.47V320.50H151.75V317.50H153.02V320.50H154.29V320.50H155.56V320.50H156.84V320.50H158.11V320.50H159.38V320.50H160.65V321.50H161.93V319.20H163.20V320.50H164.47V317.50H165.75V320.50H167.02V320.50H168.29V320.50H169.56V320.50H170.84V321.50H172.11V319.20H173.38V320.50H174.65V320.50H175.93V321.50H177.20V320.50H178.47V320.50H179.75V320.50H181.02V320.50H182.29V320.50H183.56V321.50H184.84V321.50H186.11V320.50H187.38V317.90H188.65V321.50H189.93V319.20H191.20V478.40H192.54V478.40H193.89V481.90H195.23V478.40H196.57V481.90H197.91V481.90H199.26V481.90H200.60V322.50H202.00V479.70H203.29V481.90H204.58V480.60H205.88V480.60H207.17V479.70H208.46V478.40H209.75V481.90H211.05V480.60H212.34V480.60H213.63V481.90H214.92V478.40H216.22V480.60H217.51V481.90H218.80V321.00H220.09V321.00H221.37V321.00H222.66V321.00H223.94V321.00H225.23V321.00H226.51V321.00H227.80V321.00H229.09V321.00H230.37V321.00H231.66V321.00H232.94V321.00H234.23V321.00H235.51V321.00H236.80V321.00H238.09V318.40H239.37V321.00H240.66V321.00H241.94V321.00H243.23V321.00H244.51V321.00H245.80V321.00H247.09V321.00H248.37V322.10H249.66V320.80H250.94V322.10H252.23V322.10H253.51V322.10H254.80V322.10H256.09V322.10H257.37V322.10H258.66V322.10H259.94V322.10H261.23V322.10H262.51V323.90H263.80V323.90H265.09V323.90H266.37V323.90H267.66V323.90H268.94V323.90H270.23V323.90H271.51V323.90H272.80V324.80H274.08V324.80H275.35V324.80H276.63V326.00H277.91V324.80H279.18V324.80H280.46V324.80H281.74V326.00H283.01V324.80H284.29V323.50H285.56V324.80H286.84V324.80H288.12V324.80H289.39V324.80H290.67V322.40H291.95V324.80H293.22V324.80H294.50V326.00H295.78V324.80H297.05V324.80H298.33V324.80H299.61V324.80H300.88V324.80H302.16V324.80H303.44V324.80H304.71V324.80H305.99V323.20H307.26V324.80H308.54V324.80H309.82V324.80H311.09V324.80H312.37V324.80H313.65V324.80H314.92V324.80H316.20V324.80H317.48V324.80H318.75V324.80H320.03V322.40H321.31V322.40H322.58V322.40H323.86V322.40H325.14V322.40H326.41V322.40H327.69V322.40H328.96V322.40H330.24V322.40H331.52V322.40H332.79V322.40H334.07V322.40H335.35V322.40H336.62V322.40H337.90V322.40H339.18V322.40H340.45V323.60H341.73V322.40H343.01V322.40H344.28V322.40H345.56V322.40H346.84V322.40H348.11V322.40H349.39V321.60H350.66V321.60H351.94V320.00H353.22V321.60H354.49V321.60H355.77V321.60H357.05V321.60H358.32V321.60H359.60V321.60H360.88V321.60H362.15V321.60H363.43V321.60H364.71V321.60H365.98V321.60H367.26V321.60H368.54V321.60H369.81V321.60H371.09V320.00H372.36V321.60H373.64V321.60H374.92V321.60H376.19V321.60H377.47V321.60H378.75V321.60H380.02V320.00H381.30V321.60H382.58V320.00H383.85V321.60H385.13V321.60H386.41V320.00H387.68V321.60H388.96V320.00H390.24V321.60H391.51V321.60H392.79V321.60H394.06V321.60H395.34V321.60H396.62V321.60H397.89V321.60H399.17V321.60H400.45V321.60H401.72V321.60H403.00V321.60H404.40V321.60H405.62V321.60H406.85V321.60H408.08V321.60H409.30V320.50H410.59V321.50H411.88V320.50H413.17V320.50H414.46V320.50H415.75V320.50H417.04V320.50H418.33V320.50H419.62V317.90H420.92V320.50H422.21V320.50H423.50V317.90H424.79V320.50H426.08V317.50H427.37V320.50H428.66V320.50H429.95V320.50H431.24V320.50H432.53V320.50H433.82V321.50H435.11V320.50H436.40V320.50H437.69V320.50H438.98V320.50H440.27V320.50H441.57V320.50H442.86V320.50H444.15V319.20H445.44V317.90H446.73V321.50H448.02V320.50H449.31V309.70H450.60V480.60H451.86V481.90H453.12V480.60H454.39V481.90H455.65V478.40H456.91V481.90H458.18V481.90H459.44V480.60H460.70V322.50H462.10V481.90H463.38V481.90H464.66V481.90H465.94V479.70H467.21V480.60H468.49V479.70H469.77V480.60H471.05V481.90H472.33V481.90H473.61V481.90H474.89V481.90H476.16V481.90H477.44V478.40H478.72V479.70H480.00V321.00H481.29V321.00H482.57V321.00H483.86V321.00H485.15V321.00H486.43V319.70H487.72V321.00H489.01V318.40H490.29V321.00H491.58V321.00H492.86V317.50H494.15V321.00H495.44V321.00H496.72V321.00H498.01V321.00H499.30V321.00H500.58V321.00H501.87V321.00H503.16V321.00H504.44V321.00H505.73V322.10H507.02V322.10H508.30V322.10H509.59V322.10H510.88V322.10H512.16V320.80H513.45V322.10H514.74V322.10H516.02V322.10H517.31V322.10H518.59V323.90H519.88V323.90H521.17V323.90H522.45V323.90H523.74V323.90H525.03V323.90H526.31V323.90H527.60V322.40H528.88V324.80H530.15V324.80H531.43V326.00H532.71V326.00H533.98V324.80H535.26V324.80H536.53V324.80H537.81V324.80H539.09V324.80H540.36V324.80H541.64V324.80H542.92V324.80H544.19V322.40H545.47V324.80H546.75V324.80H548.02V324.80H549.30V324.80H550.58V324.80H551.85V324.80H553.13V324.80H554.40V324.80H555.68V324.80H556.96V324.80H558.23V324.80H559.51V324.80H560.79V324.80H562.06V324.80H563.34V324.80H564.62V324.80H565.89V324.80H567.17V324.80H568.45V324.80H569.72V323.20H571.00V324.80H572.27V324.80H573.55V324.80H574.83V324.80H576.10V323.20H577.38V324.80H578.66V324.80H579.93V324.80H581.21V324.80H582.49V324.80H583.76V324.80H585.04V322.40H586.32V323.60H587.59V321.10H588.87V322.40H590.14V322.40H591.42V322.40H592.70V322.40H593.97V323.60H595.25V322.40H596.53V322.40H597.80V322.40H599.08V322.40H600.36V322.40H601.63V322.40H602.91V322.40H604.18V322.40H605.46V321.60H606.74V320.00H608.01V321.60H609.29V320.00H610.57V321.60H611.84V321.60H613.12V321.60H614.40V321.60H615.67V320.00H616.95V321.60H618.23V321.60H619.50V321.60H620.78V321.60H622.05V321.60H623.33V320.00H624.61V321.60H625.88V321.60H627.16V320.00H628.44V321.60H629.71V321.60H630.99V321.60H632.27V321.60H633.54V321.60H634.82V321.60H636.10V321.60H637.37V321.60H638.65V321.60H639.92V321.60H641.20V321.60H642.48V320.00H643.75V321.60H645.03V321.60H646.31V320.00H647.58V321.60H648.86V321.60H650.14V321.60H651.41V320.00H652.69V320.00H653.97V321.60H655.24V321.60H656.52V321.60H657.79V321.60H659.07V320.00H660.35V320.00H661.62V321.60H662.90V321.60H664.25V321.60H665.60V321.60H667.20V320.50H668.48V320.50H669.75V317.50H671.03V320.50H672.31V320.50H673.58V321.50H674.86V317.50H676.14V320.50H677.42V320.50H678.69V320.50H679.97V320.50H681.25V320.50H682.52V321.50H683.80V320.50H685.08V321.50H686.35V321.50H687.63V320.50H688.91V320.50H690.18V320.50H691.46V317.50H692.74V320.50H694.02V320.50H695.29V320.50H696.57V320.50H697.85V321.50H699.12V320.50H700.40V475.60H701.60V475.60H702.80V318.50H704.12V318.50H705.43V321.50H706.75V321.50H708.07V321.50H709.38V324.50H710.70V480.60H711.93V481.90H713.15V479.70H714.38V481.90H715.60V478.40H716.83V479.70H718.05V480.60H719.27V481.90H720.50V322.50H721.90V480.60H723.19V480.60H724.49V479.70H725.78V481.90H727.07V480.60H728.36V480.60H729.66V481.90H730.95V479.70H732.24V479.70H733.54V479.70H734.83V479.70H736.12V479.70H737.41V478.40H738.71V478.40H740.00V321.00H741.28V321.00H742.56V321.00H743.84V321.00H745.12V321.00H746.40V321.00H747.68V321.00H748.96V321.00H750.24V321.00H751.52V321.00H752.80V321.00H754.08V321.00H755.36V321.00H756.64V321.00H757.92V321.00H759.20V321.00H760.48V321.00H761.76V321.00H763.04V321.00H764.32V318.60H765.60V322.10H766.88V322.10H768.16V322.10H769.44V322.10H770.72V322.10H772.00V322.10H773.28V322.10H774.56V322.10H775.84V323.90H777.12V323.90H778.40V323.90H779.68V323.90H780.96V323.90H782.24V323.90H783.52V323.90H784.80V324.80H786.08V324.80H787.36V324.80H788.64V324.80H789.92V324.80H791.20V324.80H792.48V326.00H793.76V324.80H795.04V326.00H796.32V324.80H797.60V324.80H798.88V326.00H800.16V324.80H801.44V324.80H802.72V324.80H804.00V324.80H805.28V324.80H806.56V324.80H807.84V324.80H809.12V324.80H810.40V324.80H811.68V324.80H812.96V324.80H814.24V324.80H815.52V323.50H816.80V322.40H818.08V324.80H819.37V326.00H820.65V324.80H821.93V322.40H823.21V324.80H824.49V324.80H825.77V324.80H827.05V324.80H828.33V324.80H829.61V323.20H830.89V324.80H832.17V324.80H833.45V324.80H834.73V324.80H836.01V324.80H837.29V324.80H838.57V324.80H839.85V324.80H841.13V324.80H842.41V324.80H843.69V324.80H844.97V322.40H846.25V322.40H847.53V322.40H848.81V322.40H850.09V321.10H851.37V322.40H852.65V322.40H853.93V322.40H855.21V322.40H856.49V322.40H857.77V322.40H859.05V322.40H860.33V321.60H861.61V320.00H862.89V321.60H864.17V321.60H865.45V321.60H866.73V321.60H868.01V321.60H869.29V321.60H870.57V321.60H871.85V321.60H873.13V320.00H874.41V321.60H875.69V321.60H876.97V321.60H878.25V321.60H879.53V321.60H880.81V320.00H882.09V320.00H883.37V321.60H884.65V321.60H885.93V321.60H887.22V321.60H888.50V321.60H889.78V321.60H891.06V321.60H892.34V321.60H893.62V321.60H894.90V321.60H896.18V321.60H897.46V321.60H898.74V321.60H900.02V320.00H901.30V321.60H902.58V321.60H903.86V321.60H905.14V321.60H906.42V320.00H907.70V321.60H908.98V321.60H910.26V321.60H911.54V320.00H912.82V320.00H914.10V321.60H915.38V321.60H916.66V321.60H917.94V320.00H919.22V321.60H920.50V321.50H921.79V320.50H923.07V320.50H924.36V317.50H925.65V321.50H926.94V320.50H928.22V320.50H929.51V317.50H930.80V317.50H932.08V321.50H933.37V321.50H934.66V320.50H935.95V320.50H937.23V320.50H938.52V321.50H939.81V320.50H941.09V319.20H942.38V321.50H943.67V320.50H944.95V321.50H946.24V321.50H947.53V320.50H948.82V319.20H950.10V320.50H951.39V319.20H952.68V320.50H953.96V320.50H955.25V321.50H956.54V320.50H957.83V320.50H959.11V320.50H960.40V479.70H961.53V480.60H962.67V481.90H963.80V316.50H965.20V316.50H966.60V319.50H968.00V322.50H969.40V480.60H970.66V478.40H971.93V480.60H973.19V480.60H974.46V479.70H975.72V478.40H976.98V478.40H978.25V480.60H979.51V480.60H980.78V479.70H982.04V480.60H983.30V479.70H984.57V480.60H985.83V481.90H987.10V481.90H988.36V478.40H989.62V479.70H990.89V478.40H992.15V480.60H993.42V480.60H994.68V480.60H995.94V478.40H997.21V480.60H998.47V478.40H999.74V478.40H1001.00V322.50H1002.60V486.60V486.60H1001.00V487.50H999.74V486.60H998.47V486.60H997.21V487.50H995.94V486.60H994.68V486.60H993.42V487.50H992.15V486.60H990.89V486.60H989.62V486.60H988.36V487.50H987.10V486.60H985.83V487.50H984.57V487.50H983.30V496.00H982.04V486.60H980.78V486.60H979.51V486.60H978.25V486.60H976.98V487.50H975.72V486.60H974.46V486.60H973.19V486.60H971.93V487.50H970.66V487.50H969.40V488.20H968.00V488.20H966.60V488.20H965.20V488.20H963.80V486.60H962.67V486.60H961.53V486.60H960.40V488.20H959.11V488.20H957.83V488.20H956.54V488.20H955.25V488.20H953.96V488.20H952.68V489.60H951.39V488.20H950.10V488.20H948.82V488.20H947.53V489.60H946.24V501.60H944.95V488.20H943.67V488.20H942.38V488.20H941.09V488.20H939.81V488.20H938.52V488.20H937.23V488.20H935.95V488.20H934.66V488.20H933.37V488.20H932.08V488.20H930.80V488.20H929.51V488.20H928.22V488.20H926.94V488.20H925.65V488.20H924.36V488.20H923.07V488.20H921.79V488.20H920.50V324.90H919.22V324.90H917.94V326.90H916.66V324.90H915.38V324.90H914.10V324.90H912.82V324.90H911.54V326.90H910.26V324.90H908.98V324.90H907.70V324.90H906.42V326.90H905.14V324.90H903.86V324.90H902.58V326.90H901.30V324.90H900.02V324.90H898.74V324.90H897.46V324.90H896.18V324.90H894.90V326.90H893.62V326.90H892.34V326.90H891.06V326.90H889.78V326.90H888.50V324.90H887.22V324.90H885.93V326.90H884.65V326.90H883.37V324.90H882.09V324.90H880.81V324.90H879.53V324.90H878.25V324.90H876.97V324.90H875.69V324.90H874.41V324.90H873.13V324.90H871.85V324.90H870.57V326.90H869.29V326.90H868.01V324.90H866.73V326.90H865.45V326.90H864.17V326.90H862.89V324.90H861.61V326.90H860.33V327.10H859.05V327.10H857.77V327.10H856.49V327.10H855.21V327.10H853.93V327.10H852.65V329.50H851.37V327.10H850.09V327.10H848.81V327.10H847.53V327.10H846.25V327.10H844.97V329.20H843.69V329.20H842.41V327.20H841.13V327.20H839.85V327.20H838.57V327.20H837.29V329.20H836.01V327.20H834.73V329.20H833.45V327.20H832.17V327.20H830.89V327.20H829.61V329.20H828.33V329.20H827.05V329.20H825.77V327.20H824.49V330.10H823.21V330.10H821.93V330.10H820.65V330.10H819.37V330.10H818.08V330.10H816.80V330.10H815.52V330.10H814.24V330.10H812.96V330.10H811.68V330.10H810.40V330.10H809.12V330.10H807.84V330.10H806.56V330.10H805.28V330.10H804.00V330.10H802.72V330.10H801.44V330.10H800.16V330.10H798.88V330.10H797.60V330.10H796.32V330.10H795.04V332.50H793.76V330.10H792.48V330.10H791.20V330.10H789.92V330.10H788.64V330.10H787.36V330.10H786.08V330.10H784.80V490.80H783.52V490.80H782.24V490.80H780.96V492.10H779.68V490.80H778.40V490.80H777.12V490.80H775.84V490.80H774.56V490.80H773.28V490.80H772.00V490.80H770.72V490.80H769.44V492.10H768.16V490.80H766.88V490.80H765.60V490.80H764.32V490.80H763.04V492.10H761.76V490.80H760.48V490.80H759.20V490.80H757.92V487.50H756.64V488.80H755.36V488.80H754.08V487.50H752.80V487.50H751.52V487.50H750.24V488.80H748.96V487.50H747.68V487.50H746.40V487.50H745.12V487.50H743.84V487.50H742.56V488.80H741.28V487.50H740.00V486.60H738.71V486.60H737.41V486.60H736.12V486.60H734.83V486.60H733.54V486.60H732.24V487.50H730.95V487.50H729.66V486.60H728.36V486.60H727.07V487.50H725.78V486.60H724.49V486.60H723.19V486.60H721.90V486.60H720.50V486.60H719.27V487.50H718.05V487.50H716.83V487.50H715.60V486.60H714.38V487.50H713.15V486.60H711.93V486.60H710.70V488.20H709.38V488.20H708.07V488.20H706.75V488.20H705.43V488.20H704.12V488.20H702.80V486.60H701.60V486.60H700.40V488.20H699.12V488.20H697.85V488.20H696.57V488.20H695.29V488.20H694.02V488.20H692.74V489.60H691.46V488.20H690.18V489.60H688.91V489.60H687.63V489.60H686.35V488.20H685.08V489.60H683.80V488.20H682.52V489.60H681.25V488.20H679.97V488.20H678.69V488.20H677.42V489.60H676.14V488.20H674.86V488.20H673.58V489.60H672.31V488.20H671.03V488.20H669.75V488.20H668.48V489.60H667.20V488.20H665.60V488.20H664.25V488.20H662.90V326.90H661.62V324.90H660.35V324.90H659.07V326.90H657.79V324.90H656.52V324.90H655.24V324.90H653.97V324.90H652.69V324.90H651.41V324.90H650.14V324.90H648.86V324.90H647.58V324.90H646.31V324.90H645.03V324.90H643.75V324.90H642.48V326.90H641.20V324.90H639.92V326.90H638.65V326.90H637.37V324.90H636.10V326.90H634.82V324.90H633.54V326.90H632.27V326.90H630.99V326.90H629.71V324.90H628.44V324.90H627.16V324.90H625.88V324.90H624.61V324.90H623.33V324.90H622.05V326.90H620.78V324.90H619.50V324.90H618.23V324.90H616.95V324.90H615.67V324.90H614.40V326.90H613.12V324.90H611.84V324.90H610.57V324.90H609.29V326.90H608.01V324.90H606.74V326.90H605.46V327.10H604.18V327.10H602.91V327.10H601.63V327.10H600.36V327.10H599.08V327.10H597.80V327.10H596.53V327.10H595.25V327.10H593.97V327.10H592.70V327.10H591.42V327.10H590.14V327.10H588.87V327.10H587.59V327.10H586.32V327.10H585.04V327.20H583.76V327.20H582.49V327.20H581.21V327.20H579.93V329.20H578.66V327.20H577.38V327.20H576.10V327.20H574.83V327.20H573.55V327.20H572.27V327.20H571.00V327.20H569.72V327.20H568.45V327.20H567.17V327.20H565.89V327.20H564.62V329.20H563.34V327.20H562.06V327.20H560.79V327.20H559.51V327.20H558.23V327.20H556.96V329.20H555.68V327.20H554.40V330.10H553.13V330.10H551.85V330.10H550.58V330.10H549.30V330.10H548.02V330.10H546.75V330.10H545.47V330.10H544.19V330.10H542.92V330.10H541.64V330.10H540.36V330.10H539.09V330.10H537.81V330.10H536.53V330.10H535.26V330.10H533.98V330.10H532.71V330.10H531.43V330.10H530.15V330.10H528.88V330.10H527.60V490.80H526.31V490.80H525.03V490.80H523.74V492.10H522.45V490.80H521.17V490.80H519.88V492.10H518.59V490.80H517.31V492.10H516.02V490.80H514.74V490.80H513.45V490.80H512.16V490.80H510.88V490.80H509.59V490.80H508.30V490.80H507.02V490.80H505.73V490.80H504.44V490.80H503.16V490.80H501.87V490.80H500.58V490.80H499.30V487.50H498.01V487.50H496.72V487.50H495.44V487.50H494.15V487.50H492.86V488.80H491.58V487.50H490.29V487.50H489.01V488.80H487.72V488.80H486.43V488.80H485.15V488.80H483.86V487.50H482.57V487.50H481.29V487.50H480.00V486.60H478.72V487.50H477.44V486.60H476.16V486.60H474.89V486.60H473.61V487.50H472.33V487.50H471.05V486.60H469.77V486.60H468.49V486.60H467.21V486.60H465.94V486.60H464.66V487.50H463.38V486.60H462.10V486.60H460.70V486.60H459.44V486.60H458.18V487.50H456.91V486.60H455.65V487.50H454.39V486.60H453.12V486.60H451.86V486.60H450.60V488.20H449.31V488.20H448.02V488.20H446.73V488.20H445.44V489.60H444.15V488.20H442.86V488.20H441.57V488.20H440.28V488.20H438.98V488.20H437.69V488.20H436.40V488.20H435.11V488.20H433.82V488.20H432.53V488.20H431.24V488.20H429.95V488.20H428.66V488.20H427.37V488.20H426.08V488.20H424.79V488.20H423.50V488.20H422.21V488.20H420.92V488.20H419.62V488.20H418.33V488.20H417.04V488.20H415.75V488.20H414.46V488.20H413.17V488.20H411.88V488.20H410.59V488.20H409.30V324.90H408.07V324.90H406.85V324.90H405.62V324.90H404.40V478.10H403.00V324.90H401.72V326.90H400.45V324.90H399.17V324.90H397.89V324.90H396.62V326.90H395.34V324.90H394.06V324.90H392.79V326.90H391.51V324.90H390.24V324.90H388.96V324.90H387.68V324.90H386.41V324.90H385.13V324.90H383.85V324.90H382.58V326.90H381.30V324.90H380.02V324.90H378.75V324.90H377.47V324.90H376.19V326.90H374.92V324.90H373.64V326.90H372.36V324.90H371.09V324.90H369.81V324.90H368.54V324.90H367.26V326.90H365.98V324.90H364.71V324.90H363.43V324.90H362.15V324.90H360.88V326.90H359.60V326.90H358.32V324.90H357.05V326.90H355.77V324.90H354.49V324.90H353.22V324.90H351.94V326.90H350.66V326.90H349.39V327.10H348.11V327.10H346.84V327.10H345.56V327.10H344.28V327.10H343.01V327.10H341.73V327.10H340.45V327.10H339.18V327.10H337.90V327.10H336.62V327.10H335.35V327.10H334.07V327.10H332.79V327.10H331.52V327.10H330.24V327.10H328.96V327.10H327.69V327.10H326.41V327.10H325.14V327.10H323.86V327.10H322.58V327.10H321.31V327.10H320.03V327.20H318.75V327.20H317.48V329.20H316.20V329.20H314.92V327.20H313.65V327.20H312.37V329.20H311.09V327.20H309.82V327.20H308.54V327.20H307.26V327.20H305.99V329.20H304.71V330.10H303.44V330.10H302.16V330.10H300.88V330.10H299.61V330.10H298.33V330.10H297.05V330.10H295.78V330.10H294.50V330.10H293.22V330.10H291.95V330.10H290.67V330.10H289.39V330.10H288.12V330.10H286.84V330.10H285.56V330.10H284.29V330.10H283.01V330.10H281.74V331.40H280.46V330.10H279.18V330.10H277.91V330.10H276.63V330.10H275.35V330.10H274.08V330.10H272.80V490.80H271.51V490.80H270.23V490.80H268.94V490.80H267.66V492.10H266.37V492.10H265.09V490.80H263.80V490.80H262.51V490.80H261.23V490.80H259.94V490.80H258.66V490.80H257.37V490.80H256.09V490.80H254.80V490.80H253.51V490.80H252.23V490.80H250.94V490.80H249.66V490.80H248.37V490.80H247.09V490.80H245.80V490.80H244.51V490.80H243.23V492.10H241.94V490.80H240.66V487.50H239.37V487.50H238.09V488.80H236.80V487.50H235.51V488.80H234.23V487.50H232.94V487.50H231.66V487.50H230.37V487.50H229.09V487.50H227.80V487.50H226.51V487.50H225.23V487.50H223.94V487.50H222.66V487.50H221.37V488.80H220.09V487.50H218.80V486.60H217.51V487.50H216.22V486.60H214.92V486.60H213.63V486.60H212.34V486.60H211.05V486.60H209.75V486.60H208.46V487.50H207.17V486.60H205.88V486.60H204.58V486.60H203.29V486.60H202.00V486.60H200.60V486.60H199.26V486.60H197.91V487.50H196.57V486.60H195.23V487.50H193.89V486.60H192.54V486.60H191.20V488.20H189.93V488.20H188.65V488.20H187.38V488.20H186.11V488.20H184.84V489.60H183.56V488.20H182.29V488.20H181.02V488.20H179.75V488.20H178.47V488.20H177.20V488.20H175.93V488.20H174.65V488.20H173.38V488.20H172.11V488.20H170.84V488.20H169.56V488.20H168.29V488.20H167.02V489.60H165.75V488.20H164.47V488.20H163.20V488.20H161.93V488.20H160.65V488.20H159.38V488.20H158.11V489.60H156.84V488.20H155.56V488.20H154.29V488.20H153.02V488.20H151.75V488.20H150.47V488.20H149.20V324.90H147.93V326.90H146.65V326.90H145.38V324.90H144.10V324.90H142.83V324.90H141.55V324.90H140.28V324.90H139.01V324.90H137.73V324.90H136.46V324.90H135.18V324.90H133.91V324.90H132.63V324.90H131.36V324.90H130.09V326.90H128.81V324.90H127.54V324.90H126.26V326.90H124.99V324.90H123.71V326.90H122.44V326.90H121.17V324.90H119.89V324.90H118.62V326.90H117.34V324.90H116.07V326.90H114.80V326.90H113.52V324.90H112.25V324.90H110.97V324.90H109.70V324.90H108.42V324.90H107.15V324.90H105.88V324.90H104.60V324.90H103.33V324.90H102.05V324.90H100.78V324.90H99.50V326.90H98.23V324.90H96.96V326.90H95.68V324.90H94.41V326.90H93.13V324.90H91.86V324.90H90.58V327.10H89.31V327.10H88.04V327.10H86.76V329.50H85.49V327.10H84.21V327.10H82.94V327.10H81.66V327.10H80.39V327.10H79.12V327.10H77.84V329.50H76.57V327.10H75.29V327.10H74.02V327.10H72.74V327.10H71.47V327.10H70.20V328.40H68.92V327.10H67.65V327.10H66.37V327.10H65.10V327.10H63.82V327.10H62.55V327.10H61.28V327.10H60.00V327.20H58.73V327.20H57.45V327.20H56.18V329.20H54.90V327.20H53.63V327.20H52.36V327.20H51.08V327.20H49.81V327.20H48.53V330.10H47.26V330.10H45.99V330.10H44.71V330.10H43.44V330.10H42.16V330.10H40.89V330.10H39.61V330.10H38.34V330.10H37.07V330.10H35.79V330.10H34.52V330.10H33.24V330.10H31.97V330.10H30.69V330.10H29.42V330.10H28.15V330.10H26.87V330.10H25.60V332.50H24.32V330.10H23.05V330.10H21.77V330.10H20.50Z" fill="#00f600"/></g>
<!-- trigger position marker -->
<path d="M501.4 40.3H521.3V45.4L511.4 54.2L501.4 45.4Z" fill="#1e9cf0"/>

<g id="txt">
<!-- header -->
<text transform="translate(0 34.2) scale(1.0350 1)" x="17.65 50.17 76.09 104.46 124.86 152.63" y="0" font-size="44" font-weight="700" fill="#1682fa" stroke="#1682fa" stroke-width="2.4" stroke-linejoin="miter">Hantek</text>
<rect x="211.3" y="6.2" width="86.4" height="29.5" rx="3.5" fill="#00f600"/>
<text x="254.9" y="28.4" font-size="22.8" font-weight="700" fill="#082008" stroke="#082008" stroke-width=".4" text-anchor="middle">TD</text>
<rect x="320.1" y="5.9" width="25.4" height="29.8" rx="3.5" fill="#28d6e8"/>
<text transform="translate(0 30) scale(0.9421 1)" x="343.88" y="0" font-size="26" font-weight="700" fill="#041418" stroke="#041418" stroke-width="0.8">H</text>
<text class="hd" x="373.1" y="29.1">5ms</text>
<text class="hd" x="464" y="29.1">50.00KSa/s</text>
<text class="hd" x="619.4" y="29.1" style="letter-spacing:2.5px">4Kpt</text>
<rect x="710.4" y="5.9" width="25.8" height="29.8" rx="3.5" fill="#28d6e8"/>
<text transform="translate(0 30) scale(0.9972 1)" x="715.70" y="0" font-size="26" font-weight="700" fill="#041418" stroke="#041418" stroke-width="0.8">D</text>
<text class="hd" x="766.2" y="29.1">0.00s</text>
<rect x="858" y="6.2" width="25.2" height="29.5" rx="3.5" fill="#28d6e8"/>
<text transform="translate(0 30) scale(0.8622 1)" x="1002.08" y="0" font-size="26" font-weight="700" fill="#041418" stroke="#041418" stroke-width="0.8">T</text>
<text class="hd" x="888.6" y="31.4" style="fill:#f7f900;stroke:#f7f900;letter-spacing:1.6px">800mV</text>

<!-- level markers -->
<path d="M0 226H10L19.3 235.8L10 245.7H0Z" fill="#f7f900"/>
<text x="0.1" y="240.9" font-size="14" fill="#2a2000" stroke="#2a2000" stroke-width=".3">1</text>
<path d="M0 216.1H10L19.3 225.7L10 235.4H0Z" fill="#f7f900"/>
<text transform="translate(0 230.4) scale(0.7453 1)" x="1.30" y="0" font-size="14" fill="#2a2000" stroke="#2a2000" stroke-width="0.4">T</text>
<path d="M0 480H9.8L19.3 489.4L9.8 498.9H0Z" fill="#00f600"/>
<text transform="translate(0 495.2) scale(0.9024 1)" x="0.26" y="0" font-size="18" fill="#063006" stroke="#063006" stroke-width="0.3">2</text>

<!-- watermark -->
<text class="wm" x="20.3" y="99.8" font-size="12.7">Bryan1</text>
<text class="wm" x="20.3" y="119.6" font-size="10.5">www.thebackshed.com</text>
<text class="wm" x="20.3" y="134.7" font-size="10.5">2026-03-20</text>

<!-- footer -->
<defs>
<clipPath id="c1"><path d="M25 560H45V593.3H42.4V600H37.7V593.3H25Z"/></clipPath>
<clipPath id="c2"><path d="M660 560H780V584H685.9V576.8H682.9V584H677.6V576.8H660Z"/></clipPath>
<clipPath id="c3"><path d="M590 580H760V608H608.9V597.6H605.4V608H600.1V597.6H590Z"/></clipPath>
</defs>
<rect x="20.4" y="560.4" width="253.6" height="46.1" rx="2.5" fill="#f7f900"/>
<g clip-path="url(#c1)"><text transform="translate(0 596.8) scale(1.0371 1)" x="27.47" y="0" font-size="37.2" fill="#141200" stroke="#141200" stroke-width="0.6">1</text></g>
<text transform="translate(0 596.8) scale(0.7031 1)" x="70.75 98.87" y="0" font-size="32.2" font-weight="700" fill="#141200" stroke="#141200" stroke-width="0.5">DC</text>
<text transform="translate(0 596.8) scale(0.9349 1)" x="250.29 269.05" y="0" font-size="28.6" fill="#141200" stroke="#141200" stroke-width="0.5">5V</text>

<rect x="282.5" y="560.5" width="254" height="46.1" rx="2.5" fill="#00f600"/>
<text transform="translate(0 596.8) scale(0.9618 1)" x="300.94" y="0" font-size="37.2" fill="#031403" stroke="#031403" stroke-width="0.9">2</text>
<text transform="translate(0 596.8) scale(0.6539 1)" x="477.88 509.03" y="0" font-size="32.2" font-weight="700" fill="#031403" stroke="#031403" stroke-width="0.5">DC</text>
<text transform="translate(0 596.8) scale(0.9122 1)" x="544.49 563.38" y="0" font-size="28.6" fill="#031403" stroke="#031403" stroke-width="0.5">5V</text>

<rect x="545" y="560.3" width="254.4" height="46.5" rx="2.5" fill="#fa0068"/>
<text transform="translate(0 596.6) scale(1.0765 1)" x="512.68" y="0" font-size="36.0" fill="#24000a" stroke="#24000a" stroke-width="0.7">G</text>
<path d="M598.5 573.4V565H620.6V578.3H641.8V569.1" fill="none" stroke="#24000a" stroke-width="2.5"/>
<g clip-path="url(#c2)"><text transform="translate(0 580) scale(0.9708 1)" x="694.79 705.75 714.37 728.74 743.05 762.70 780.14" y="0" font-size="20.2" font-weight="700" fill="#24000a" stroke="#24000a" stroke-width="1.0">1.00KHz</text></g>
<g clip-path="url(#c3)"><text transform="translate(0 600.8) scale(0.9421 1)" x="633.85 645.52 654.66 669.78 684.89 703.14 719.97 722.97 748.33 763.38 784.20" y="0" dy="0 0 0 0 0 -3.4 0 0 3.4 0 0" font-size="20.2" font-weight="700" fill="#24000a" stroke="#24000a" stroke-width="1.0">1.50Vpp 0mv</text></g>

</g>
<!-- usb icon -->
<path d="M815.5 579.3H831.4L827.3 600.6H815C809.4 600.6 806.7 595.4 806.8 590C806.9 584.2 810 579.3 815.5 579.3Z" fill="#265fe6"/>
<path d="M832.4 582.7H840.6L838.9 598H829.7Z" fill="#fff"/>
<path d="M835 585.3h3l-.4 3.3h-3zM834.1 591.7h3l-.4 3.5h-3z" fill="#101010"/>
</svg>
</body>
</html>
